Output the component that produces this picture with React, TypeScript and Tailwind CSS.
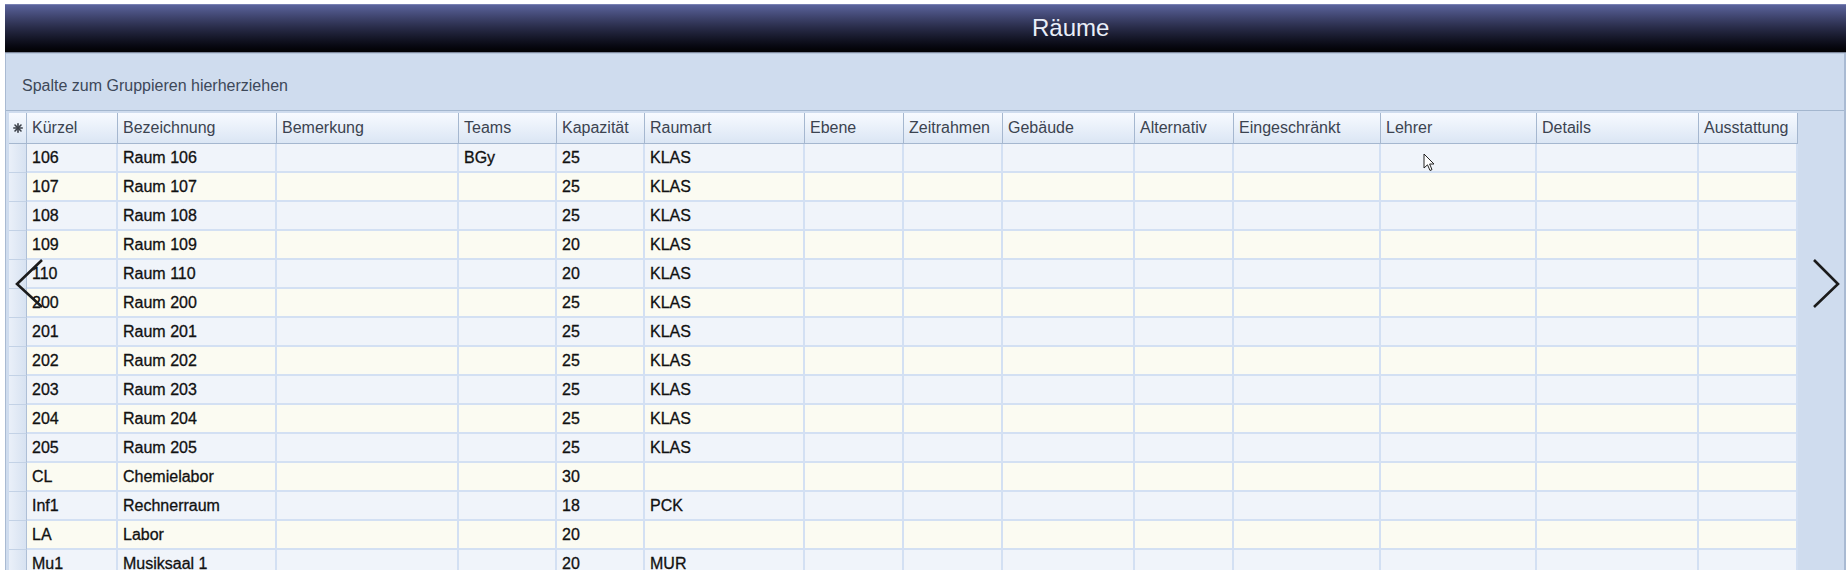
import React from "react";

// Column layout of the room grid
const columns = [
  "Kürzel",
  "Bezeichnung",
  "Bemerkung",
  "Teams",
  "Kapazität",
  "Raumart",
  "Ebene",
  "Zeitrahmen",
  "Gebäude",
  "Alternativ",
  "Eingeschränkt",
  "Lehrer",
  "Details",
  "Ausstattung",
];

interface Room {
  kuerzel: string;
  name: string;
  teams?: string;
  kapazitaet: string;
  raumart?: string;
}

const rooms: Room[] = [
  { kuerzel: "106", name: "Raum 106", teams: "BGy", kapazitaet: "25", raumart: "KLAS" },
  { kuerzel: "107", name: "Raum 107", kapazitaet: "25", raumart: "KLAS" },
  { kuerzel: "108", name: "Raum 108", kapazitaet: "25", raumart: "KLAS" },
  { kuerzel: "109", name: "Raum 109", kapazitaet: "20", raumart: "KLAS" },
  { kuerzel: "110", name: "Raum 110", kapazitaet: "20", raumart: "KLAS" },
  { kuerzel: "200", name: "Raum 200", kapazitaet: "25", raumart: "KLAS" },
  { kuerzel: "201", name: "Raum 201", kapazitaet: "25", raumart: "KLAS" },
  { kuerzel: "202", name: "Raum 202", kapazitaet: "25", raumart: "KLAS" },
  { kuerzel: "203", name: "Raum 203", kapazitaet: "25", raumart: "KLAS" },
  { kuerzel: "204", name: "Raum 204", kapazitaet: "25", raumart: "KLAS" },
  { kuerzel: "205", name: "Raum 205", kapazitaet: "25", raumart: "KLAS" },
  { kuerzel: "CL", name: "Chemielabor", kapazitaet: "30" },
  { kuerzel: "Inf1", name: "Rechnerraum", kapazitaet: "18", raumart: "PCK" },
  { kuerzel: "LA", name: "Labor", kapazitaet: "20" },
  { kuerzel: "Mu1", name: "Musiksaal 1", kapazitaet: "20", raumart: "MUR" },
  { kuerzel: "Mu2", name: "Musiksaal 2", kapazitaet: "20", raumart: "MUR" },
];

const gridCols =
  "grid grid-cols-[18px_91px_159px_182px_98px_88px_160px_99px_99px_132px_99px_147px_156px_162px_99px]";

const NewRowStar = () => (
  <svg width="10" height="10" viewBox="0 0 10 10" className="text-[#3a3f48]">
    <g stroke="currentColor" strokeWidth="1.6" strokeLinecap="round">
      <line x1="5" y1="0.8" x2="5" y2="9.2" />
      <line x1="0.8" y1="5" x2="9.2" y2="5" />
      <line x1="2" y1="2" x2="8" y2="8" />
      <line x1="8" y1="2" x2="2" y2="8" />
    </g>
  </svg>
);

const HeaderRow = () => (
  <div className={gridCols}>
    <div className="h-[31px] flex items-center justify-center border-r border-b border-[#a5b7cf] bg-linear-to-b from-[#f7faff] to-[#dbe6f4]">
      <NewRowStar />
    </div>
    {columns.map((col) => (
      <div
        key={col}
        className="h-[31px] flex items-center pl-[5px] border-r border-b border-[#a5b7cf] bg-linear-to-b from-[#f7faff] to-[#dbe6f4] text-[16px] text-[#3b4350] whitespace-nowrap overflow-hidden"
      >
        {col}
      </div>
    ))}
  </div>
);

const DataRow = ({ room, index }: { room: Room; index: number }) => {
  const cells = [
    room.kuerzel,
    room.name,
    "",
    room.teams || "",
    room.kapazitaet,
    room.raumart || "",
    "",
    "",
    "",
    "",
    "",
    "",
    "",
    "",
  ];
  const rowBg = index % 2 === 0 ? "bg-[#f0f4fa]" : "bg-[#fbfbf2]";

  return (
    <div className={gridCols}>
      <div className="h-[29px] border-r border-b border-r-[#aebfd6] border-b-[#c3d2e6] bg-linear-to-r from-[#eaf0f9] to-[#d7e2f1]" />
      {cells.map((value, i) => (
        <div
          key={i}
          className={`h-[29px] flex items-center pl-[5px] pt-[1px] border-r-2 border-b-2 border-[#d3e0f3] ${rowBg} text-[16px] text-[#111111] [-webkit-text-stroke:0.3px_#111111] whitespace-nowrap overflow-hidden`}
        >
          {value}
        </div>
      ))}
    </div>
  );
};

export default function App() {
  return (
    <div className="relative w-[1846px] h-[570px] overflow-hidden bg-white font-['Liberation_Sans',Arial,sans-serif]">
      <div className="pt-[4px] pl-[5px]">
        {/* Title bar */}
        <div className="h-[49px] flex items-center pl-[1027px] pb-[2px] border-t border-[#7880b2] border-b border-b-[#7e879a] bg-linear-to-b from-[#5a629b] via-[#272a46] to-[#020204]">
          <span className="text-[24px] text-[#e9eef8]">Räume</span>
        </div>

        {/* Grid panel */}
        <div className="border-l border-r-2 border-[#a9bad2] bg-[#cfdcee] h-[520px]">
          <div className="h-[58px] flex items-center pl-[16px] pt-[8px] border-t border-t-[#b9c8dc] border-b border-b-[#a3b6ce] text-[16px] text-[#3d4859]">
            Spalte zum Gruppieren hierherziehen
          </div>
          <div className="pt-[2px] pl-[3px]">
            <HeaderRow />
            {rooms.map((room, i) => (
              <DataRow key={room.kuerzel} room={room} index={i} />
            ))}
          </div>
        </div>
      </div>

      {/* Navigation arrows over the grid */}
      <svg
        className="absolute left-[14px] top-[258px]"
        width="32"
        height="52"
        viewBox="0 0 32 52"
      >
        <polyline
          points="28,2 3,26 28,49"
          fill="none"
          stroke="#1b1b1b"
          strokeWidth="2.6"
        />
      </svg>
      <svg
        className="absolute left-[1810px] top-[258px]"
        width="32"
        height="52"
        viewBox="0 0 32 52"
      >
        <polyline
          points="4,2 28,26 4,49"
          fill="none"
          stroke="#1b1b1b"
          strokeWidth="2.6"
        />
      </svg>

      {/* Mouse pointer */}
      <svg
        className="absolute left-[1423px] top-[153px]"
        width="13"
        height="20"
        viewBox="0 0 13 20"
      >
        <path
          d="M1 1 L1 15 L4.5 11.8 L7 17.5 L9 16.6 L6.6 11 L11 11 Z"
          fill="#ffffff"
          stroke="#222222"
          strokeWidth="1"
          strokeLinejoin="round"
        />
      </svg>
    </div>
  );
}
